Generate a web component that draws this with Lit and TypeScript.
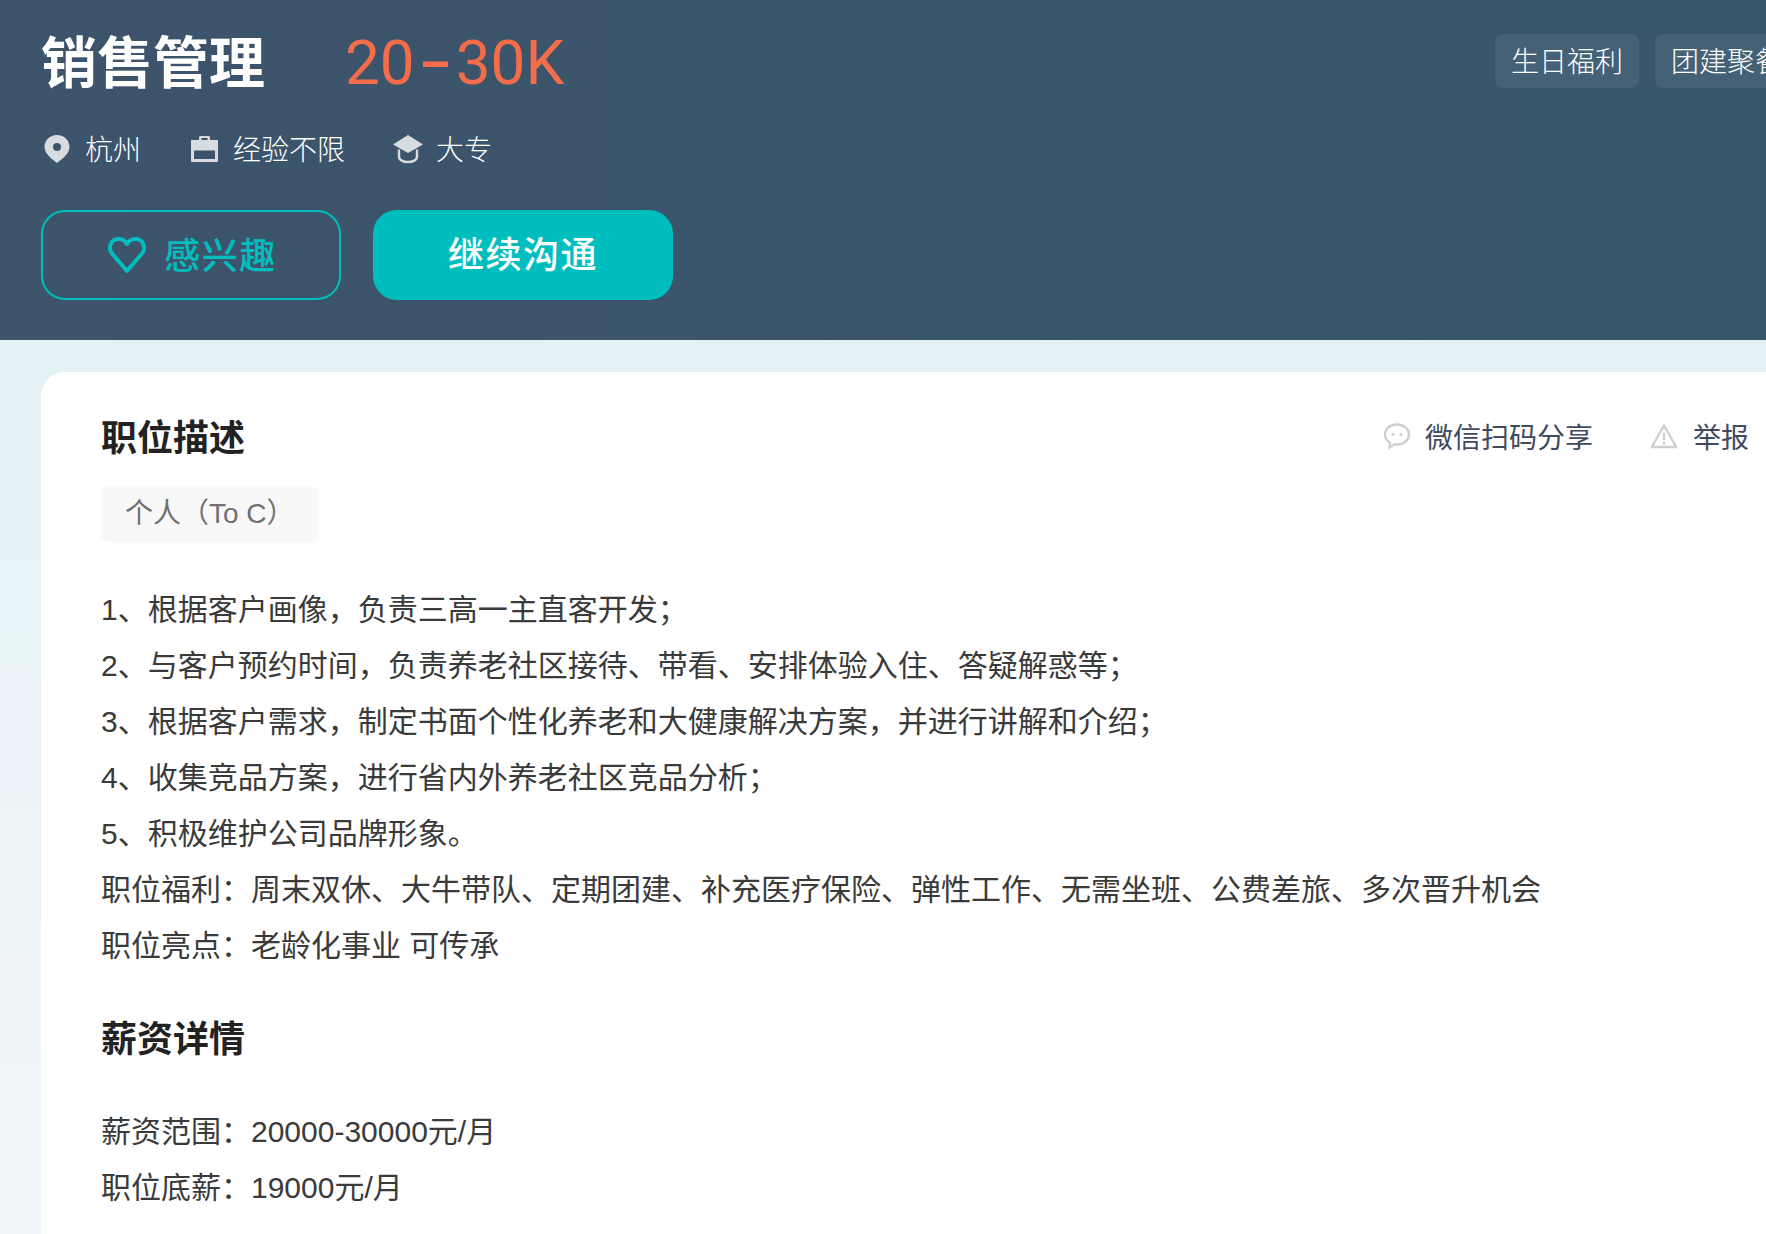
import { LitElement, html, css } from "lit";
import { customElement } from "lit/decorators.js";

@customElement("app-root")
export class AppRoot extends LitElement {
  static styles = css`
    :host { display: block; width: 1766px; height: 1234px; overflow: hidden; font-family: "Liberation Sans", "Noto Sans CJK SC", sans-serif; background: linear-gradient(180deg, #e3f2f4 0%, #e4f2f5 35%, #f1f5f9 90%); }
    .head { height: 340px; box-sizing: border-box; background: linear-gradient(90deg, #3d546b, #37566b); padding: 24px 0 0 41px; position: relative; overflow: hidden; }
    .titleRow { display: flex; align-items: center; height: 70px; }
    .title { font-size: 56px; font-weight: 700; color: #fff; font-family: "Noto Sans CJK SC", sans-serif; width: 304px; line-height: 70px; }
    .salary { font-size: 62px; font-weight: 400; color: #f46c49; font-family: "Roboto", sans-serif; line-height: 70px; padding-top: 8px; white-space: nowrap; }
    .dash { display: inline-block; width: 41px; text-align: center; transform: scale(1.7, 1.2) translateY(-1px); }
    .tags { position: absolute; top: 34px; left: 1495px; display: flex; gap: 16px; }
    .tag { height: 54px; line-height: 52px; padding: 0 16px; font-size: 28px; color: #fff; background: #446176; border-radius: 8px; white-space: nowrap; font-family: "Noto Sans CJK SC", sans-serif; font-weight: 300; }
    .meta { display: flex; align-items: center; margin-top: 33px; height: 42px; font-size: 28px; color: #fff; font-family: "Noto Sans CJK SC", sans-serif; font-weight: 300; }
    .metaItem { display: flex; align-items: center; margin-right: 47px; }
    .metaItem svg { margin-right: 15px; margin-top: 2px; display: block; }
    .metaItem svg.cap { margin-right: 13px; }
    .btns { display: flex; gap: 32px; margin-top: 41px; }
    .btn { width: 300px; height: 90px; box-sizing: border-box; border-radius: 24px; display: flex; align-items: center; justify-content: center; padding-bottom: 6px; font-size: 36px; font-weight: 500; font-family: "Noto Sans CJK SC", sans-serif; letter-spacing: 1.5px; }
    .btn.ghost { border: 2px solid #00bebd; color: #00bebd; padding-left: 2px; padding-bottom: 5px; }
    .btn.ghost svg { margin-right: 17px; margin-top: 4px; }
    .btn.solid { background: #00bebd; color: #fff; }
    .card { margin: 32px 0 0 41px; background: #fff; border-radius: 24px 0 0 0; height: 900px; box-sizing: border-box; padding: 40px 0 0 60px; position: relative; }
    .secHead { display: flex; align-items: center; height: 46px; }
    h2 { margin: 0; font-size: 36px; line-height: 46px; font-weight: 700; color: #222; font-family: "Noto Sans CJK SC", sans-serif; }
    .actions { position: absolute; top: 41px; left: 1342px; display: flex; align-items: center; height: 46px; font-size: 28px; color: #414a60; font-family: "Noto Sans CJK SC", sans-serif; font-weight: 400; white-space: nowrap; }
    .action { display: flex; align-items: center; margin-right: 57px; }
    .action svg { margin-right: 14px; display: block; }
    .action svg.warn { margin-right: 15px; }
    .chip { display: block; box-sizing: border-box; margin-top: 28px; height: 56px; line-height: 56px; padding: 0 24px; background: #f8f8f8; border-radius: 8px; color: #707070; font-size: 28px; font-weight: 400; width: 218px; white-space: nowrap; }
    .lines { margin-top: 40px; font-size: 30px; line-height: 56px; color: #3a3a3a; }
    .lines div { white-space: nowrap; }
    .sec2 { margin-top: 39px; }
    .lines.lines2 { margin-top: 45px; }
  `;

  render() {
    return html`
      <div class="head">
        <div class="titleRow"><div class="title">销售管理</div><div class="salary">20<span class="dash">-</span>30K</div></div>
        <div class="tags"><div class="tag">生日福利</div><div class="tag">团建聚餐</div></div>
        <div class="meta">
          <div class="metaItem">
            <svg width="29" height="30" viewBox="-3 -1 29 30"><path fill="#d8dce0" fill-rule="evenodd" d="M13 0C5.800 0 .5 5.300.5 11.800c0 5 3.500 9.800 12.500 16.200 9-6.400 12.500-11.200 12.500-16.200C25.500 5.300 20.200 0 13 0zm0 8a4 4 0 1 1 0 8 4 4 0 0 1 0-8z"/></svg>
            杭州
          </div>
          <div class="metaItem">
            <svg width="30" height="30" viewBox="-3 -2 30 30"><path fill="#d8dce0" fill-rule="evenodd" d="M8 4V1.500C8 .6 8.700 0 9.500 0h8c.8 0 1.500.6 1.500 1.500V4h7c.6 0 1 .4 1 1v20c0 .6-.4 1-1 1H1c-.6 0-1-.4-1-1V5c0-.6.400-1 1-1h7zm2.500 0h6V2h-6v2zM3 14.500V23h21v-8.500H3z"/></svg>
            经验不限
          </div>
          <div class="metaItem">
            <svg class="cap" width="31" height="30" viewBox="-1 -1 31 30"><path fill="#d8dce0" d="M15 0 30 9.500 15 18 0 9.500z"/><path fill="none" stroke="#d8dce0" stroke-width="2.400" d="M6 14.500V22c0 3 4.500 5 9 5s9-2 9-5v-7.500"/></svg>
            大专
          </div>
        </div>
        <div class="btns">
          <div class="btn ghost">
            <svg width="40" height="38" viewBox="0 0 40 38"><path fill="none" stroke="#00bebd" stroke-width="4" stroke-linejoin="round" d="M20 35 5 17.500C1 12.500 3 4 10.500 3 15 2.500 18.500 5 20 8c1.500-3 5-5.500 9.500-5C37 4 39 12.500 35 17.500z"/></svg>
            感兴趣
          </div>
          <div class="btn solid">继续沟通</div>
        </div>
      </div>
      <div class="card">
        <div class="secHead"><h2>职位描述</h2></div>
        <div class="actions">
          <div class="action">
            <svg width="28" height="28" viewBox="0 0 28 28"><path fill="none" stroke="#cfcfcf" stroke-width="2.400" d="M14 2.500C7.200 2.500 2 6.900 2 12.500c0 3.500 2.100 6.400 5 8.200l-.5 4.800 5-3.200c.8.100 1.600.2 2.500.2 6.800 0 12-4.400 12-10S20.800 2.500 14 2.500z"/><circle cx="10" cy="12.500" r="1.500" fill="#cfcfcf"/><circle cx="18" cy="12.500" r="1.500" fill="#cfcfcf"/></svg>
            微信扫码分享
          </div>
          <div class="action">
            <svg class="warn" width="28" height="26" viewBox="0 0 28 26"><path fill="none" stroke="#cfcfcf" stroke-width="2.400" stroke-linejoin="round" d="M14 2.500 1.800 24h24.400z"/><path stroke="#cfcfcf" stroke-width="2.400" d="M14 9.500v7.500M14 18.500v3"/></svg>
            举报
          </div>
        </div>
        <div class="chip">个人（To C）</div>
        <div class="lines">
          <div>1、根据客户画像，负责三高一主直客开发；</div>
          <div>2、与客户预约时间，负责养老社区接待、带看、安排体验入住、答疑解惑等；</div>
          <div>3、根据客户需求，制定书面个性化养老和大健康解决方案，并进行讲解和介绍；</div>
          <div>4、收集竞品方案，进行省内外养老社区竞品分析；</div>
          <div>5、积极维护公司品牌形象。</div>
          <div>职位福利：周末双休、大牛带队、定期团建、补充医疗保险、弹性工作、无需坐班、公费差旅、多次晋升机会</div>
          <div>职位亮点：老龄化事业 可传承</div>
        </div>
        <div class="sec2"><h2>薪资详情</h2></div>
        <div class="lines lines2">
          <div>薪资范围：20000-30000元/月</div>
          <div>职位底薪：19000元/月</div>
        </div>
      </div>
    `;
  }
}
